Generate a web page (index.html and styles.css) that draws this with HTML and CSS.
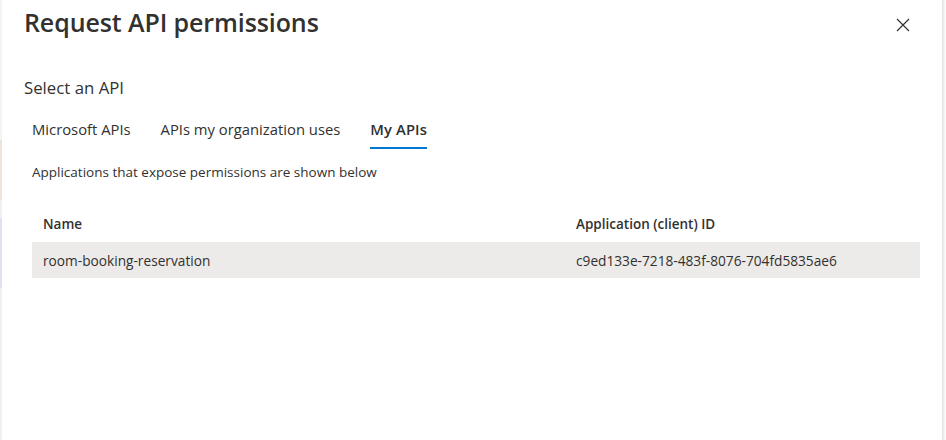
FILE: index.html
```html
<!DOCTYPE html>
<html lang="en">
<head>
<meta charset="utf-8">
<title>Request API permissions</title>
<link rel="stylesheet" href="styles.css">
</head>
<body>
<div class="page">
  <div class="backdrop">
    <span class="bd bd-a"></span>
    <span class="bd bd-b"></span>
    <span class="bd bd-c"></span>
  </div>
  <main class="panel">
    <header class="panel-head">
      <h1 class="title">Request API permissions</h1>
      <button class="close" aria-label="Close">
        <svg width="14" height="14" viewBox="0 0 14 14"><path d="M1 1 L13 13 M13 1 L1 13" stroke="#323130" stroke-width="1.2" fill="none"/></svg>
      </button>
    </header>
    <h2 class="subtitle">Select an API</h2>
    <nav class="tabs">
      <span class="tab">Microsoft APIs</span>
      <span class="tab">APIs my organization uses</span>
      <span class="tab active">My APIs</span>
    </nav>
    <p class="hint">Applications that expose permissions are shown below</p>
    <div class="table">
      <div class="row head">
        <div class="cell name">Name</div>
        <div class="cell id">Application (client) ID</div>
      </div>
      <div class="row item">
        <div class="cell name">room-booking-reservation</div>
        <div class="cell id">c9ed133e-7218-483f-8076-704fd5835ae6</div>
      </div>
    </div>
  </main>
  <div class="edge"></div>
</div>
</body>
</html>
```
FILE: styles.css
```css
* { box-sizing: border-box; }
html, body { margin: 0; padding: 0; background: #fff; }
body {
  font-family: "Open Sans", "Noto Sans", sans-serif;
  color: #323130;
  width: 946px;
  height: 440px;
  overflow: hidden;
}
.page {
  display: flex;
  height: 440px;
}
.backdrop {
  width: 2px;
  flex: none;
  display: flex;
  flex-direction: column;
  background: #f0f0f0;
}
.bd { display: block; width: 2px; }
.bd-a { height: 140px; background: #f3f3f3; }
.bd-b { height: 60px; background: #eee4d9; }
.bd-c { height: 70px; margin-top: 18px; background: #dde2ee; }
.panel {
  flex: 1;
  padding: 0 22px 0 22px;
}
.panel-head {
  display: flex;
  justify-content: space-between;
  align-items: flex-start;
}
.title {
  margin: 4px 0 0 0;
  font-size: 25px;
  font-weight: 600;
  line-height: 37px;
  letter-spacing: -0.1px;
}
.close {
  border: 0;
  background: none;
  padding: 0;
  margin: 18px 10px 0 0;
  width: 14px;
  height: 14px;
  display: flex;
}
.subtitle {
  margin: 36px 0 0 0;
  font-size: 16.8px;
  font-weight: 400;
  line-height: 22px;
}
.tabs {
  display: flex;
  margin-top: 10px;
}
.tab {
  font-size: 14.8px;
  line-height: 22px;
  padding: 9px 8px 7px 8px;
  margin-right: 14px;
  border-bottom: 2px solid transparent;
}
.tab.active {
  font-weight: 600;
  border-bottom-color: #0078d4;
  padding-left: 0;
  padding-right: 0;
  margin-left: 8px;
  letter-spacing: 0.1px;
}
.hint {
  margin: 13px 0 0 8px;
  font-size: 13.5px;
  line-height: 20px;
}
.table {
  margin: 23px 0 0 8px;
  width: 888px;
}
.row {
  display: flex;
  height: 36px;
  align-items: center;
  font-size: 13.7px;
}
.row.head { font-weight: 600; height: 37px; font-size: 13.5px; }
.row.item { background: #edebe9; }
.cell.name { width: 544px; padding-left: 11px; }
.cell.id { flex: 1; }
.edge {
  width: 4px;
  flex: none;
  background: linear-gradient(to right, #e1e1e1, #f4f4f4 60%, #fff);
}
```
